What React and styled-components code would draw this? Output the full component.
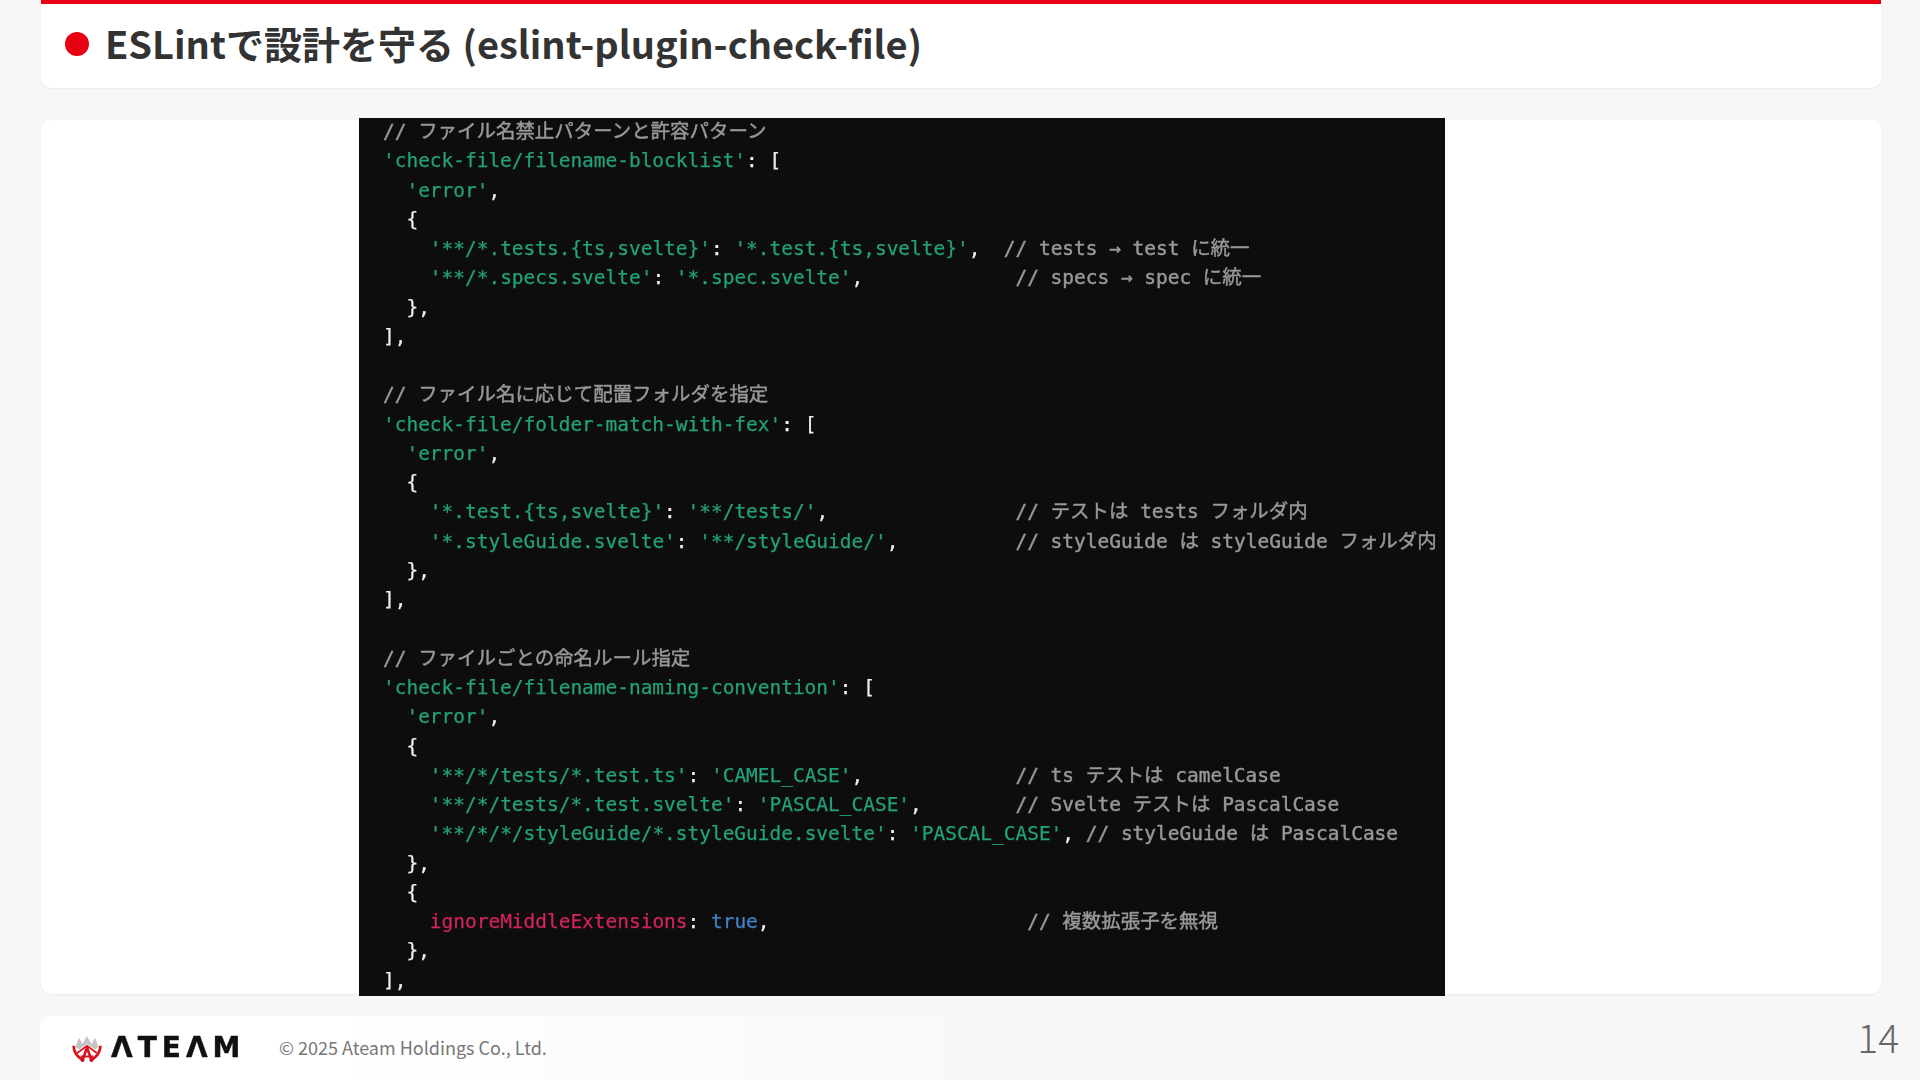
import React from "react";
import styled, { createGlobalStyle } from "styled-components";

const Global = createGlobalStyle`
  html, body { margin: 0; padding: 0; background: #f7f7f7; }
`;

const Slide = styled.div`
  width: 1920px;
  height: 1080px;
  box-sizing: border-box;
  padding: 0 39px 0 41px;
  display: flex;
  flex-direction: column;
  overflow: hidden;
  font-family: "Noto Sans CJK JP", "Noto Sans", sans-serif;
`;

const Header = styled.header`
  flex: none;
  height: 88px;
  box-sizing: border-box;
  border-top: 4px solid #e60012;
  border-radius: 0 0 10px 10px;
  background: #fff;
  box-shadow: 0 1px 2px rgba(0, 0, 0, 0.06);
  display: flex;
  align-items: center;
  gap: 16px;
  padding: 0 0 4px 24px;
`;

const Dot = styled.span`
  flex: none;
  width: 24px;
  height: 24px;
  border-radius: 50%;
  background: #e60012;
`;

const Title = styled.h1`
  margin: -2px 0 0;
  font-size: 38px;
  line-height: 1;
  font-weight: 700;
  color: #333;
  letter-spacing: 0;
`;

const Panel = styled.main`
  flex: none;
  height: 874px;
  margin-top: 32px;
  border-radius: 10px;
  background: #fff;
  box-shadow: 0 1px 2px rgba(0, 0, 0, 0.06);
  display: flex;
  justify-content: flex-start;
  align-items: center;
  padding-left: 318px;
`;

const CodeShot = styled.div`
  flex: none;
  width: 1086px;
  height: 878px;
  box-sizing: border-box;
  padding: 0 0 0 24px;
  overflow: hidden;
  background: #0d0d0d;
  filter: blur(0.35px);
`;

const Lines = styled.pre`
  margin: -1px 0 0;
  color: #f0f0f0;
  font-family: "DejaVu Sans Mono", "Noto Sans CJK JP", monospace;
  font-size: 19.47px;
  line-height: 29.27px;
  -webkit-text-stroke: 0.25px currentColor;
`;

const Str = styled.span`color: #22a27c;`;
const Com = styled.span`
  color: #989898;
  -webkit-text-stroke: 0.45px currentColor;
`;
const Key = styled.span`color: #d3235f;`;
const Bool = styled.span`color: #3d83c9;`;

const Footer = styled.footer`
  flex: 1;
  margin: 22px -18px 0 -1px;
  display: flex;
  align-items: center;
  justify-content: space-between;
`;

const FooterCard = styled.div`
  width: 1000px;
  height: 100%;
  box-sizing: border-box;
  padding: 0 0 0 31px;
  border-radius: 10px 0 0 0;
  background: linear-gradient(90deg, #ffffff 0%, #ffffff 30%, #f7f7f7 100%);
  display: flex;
  align-items: center;
  gap: 38px;
`;

const Logo = styled.div`
  flex: none;
  display: flex;
  align-items: center;
  gap: 8px;
  width: 170px;
  filter: blur(0.3px);

  svg {
    flex: none;
  }
`;

const Wordmark = styled.span`
  font-family: "DejaVu Sans", sans-serif;
  font-weight: 700;
  font-size: 28px;
  line-height: 1;
  letter-spacing: 5px;
  color: #111;
  white-space: nowrap;
  -webkit-text-stroke: 0.4px currentColor;
`;

const Copyright = styled.span`
  font-size: 18px;
  line-height: 1;
  color: #777;
  margin-top: -2px;
`;

const PageNumber = styled.span`
  font-size: 39px;
  line-height: 1;
  font-weight: 300;
  color: #666;
  margin: -24px 0 0 0;
`;

const Crown = () => (
  <svg width="32" height="29" viewBox="0 0 36 32" fill="none">
    <path d="M5 14 L9 4 L13 11 L18 2 L23 11 L27 4 L31 14 L27 17 L18 11 L9 17 Z" fill="#c4c4c4" />
    <path d="M3 13 C3 22 9 26 13 29 L18 15 L23 29 C27 26 33 22 33 13" stroke="#d9141e" strokeWidth="3" strokeLinejoin="round" />
    <path d="M7 21 L18 13 L29 21 M11 25 L25 25" stroke="#d9141e" strokeWidth="2" />
    <circle cx="13" cy="29" r="2.2" fill="#c8101a" />
    <circle cx="23" cy="29" r="2.2" fill="#c8101a" />
  </svg>
);

const code = (
  <>
    <Com>{"// ファイル名禁止パターンと許容パターン"}</Com>{"\n"}
    <Str>{"'check-file/filename-blocklist'"}</Str>{": [\n"}
    {"  "}<Str>{"'error'"}</Str>{",\n"}
    {"  {\n"}
    {"    "}<Str>{"'**/*.tests.{ts,svelte}'"}</Str>{": "}<Str>{"'*.test.{ts,svelte}'"}</Str>{",  "}<Com>{"// tests → test に統一"}</Com>{"\n"}
    {"    "}<Str>{"'**/*.specs.svelte'"}</Str>{": "}<Str>{"'*.spec.svelte'"}</Str>{",             "}<Com>{"// specs → spec に統一"}</Com>{"\n"}
    {"  },\n],\n\n"}
    <Com>{"// ファイル名に応じて配置フォルダを指定"}</Com>{"\n"}
    <Str>{"'check-file/folder-match-with-fex'"}</Str>{": [\n"}
    {"  "}<Str>{"'error'"}</Str>{",\n"}
    {"  {\n"}
    {"    "}<Str>{"'*.test.{ts,svelte}'"}</Str>{": "}<Str>{"'**/tests/'"}</Str>{",                "}<Com>{"// テストは tests フォルダ内"}</Com>{"\n"}
    {"    "}<Str>{"'*.styleGuide.svelte'"}</Str>{": "}<Str>{"'**/styleGuide/'"}</Str>{",          "}<Com>{"// styleGuide は styleGuide フォルダ内"}</Com>{"\n"}
    {"  },\n],\n\n"}
    <Com>{"// ファイルごとの命名ルール指定"}</Com>{"\n"}
    <Str>{"'check-file/filename-naming-convention'"}</Str>{": [\n"}
    {"  "}<Str>{"'error'"}</Str>{",\n"}
    {"  {\n"}
    {"    "}<Str>{"'**/*/tests/*.test.ts'"}</Str>{": "}<Str>{"'CAMEL_CASE'"}</Str>{",             "}<Com>{"// ts テストは camelCase"}</Com>{"\n"}
    {"    "}<Str>{"'**/*/tests/*.test.svelte'"}</Str>{": "}<Str>{"'PASCAL_CASE'"}</Str>{",        "}<Com>{"// Svelte テストは PascalCase"}</Com>{"\n"}
    {"    "}<Str>{"'**/*/*/styleGuide/*.styleGuide.svelte'"}</Str>{": "}<Str>{"'PASCAL_CASE'"}</Str>{", "}<Com>{"// styleGuide は PascalCase"}</Com>{"\n"}
    {"  },\n  {\n"}
    {"    "}<Key>ignoreMiddleExtensions</Key>{": "}<Bool>true</Bool>{",                      "}<Com>{"// 複数拡張子を無視"}</Com>{"\n"}
    {"  },\n],"}
  </>
);

export default function App() {
  return (
    <Slide>
      <Global />
      <Header>
        <Dot />
        <Title>ESLintで設計を守る (eslint-plugin-check-file)</Title>
      </Header>
      <Panel>
        <CodeShot>
          <Lines>{code}</Lines>
        </CodeShot>
      </Panel>
      <Footer>
        <FooterCard>
          <Logo>
            <Crown />
            <Wordmark>ΛTEΛM</Wordmark>
          </Logo>
          <Copyright>© 2025 Ateam Holdings Co., Ltd.</Copyright>
        </FooterCard>
        <PageNumber>14</PageNumber>
      </Footer>
    </Slide>
  );
}
